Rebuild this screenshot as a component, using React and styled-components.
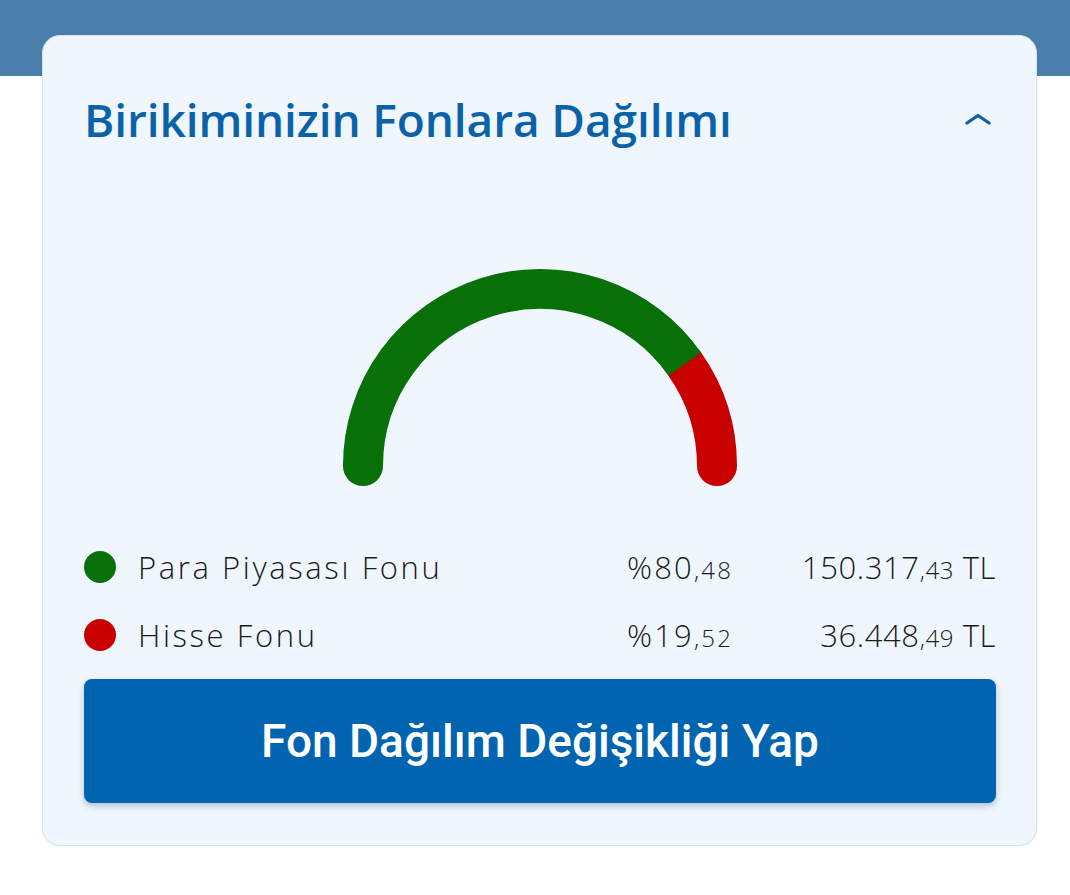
import React from "react";
import styled, { createGlobalStyle } from "styled-components";

const Global = createGlobalStyle`
  html, body { margin: 0; padding: 0; }
  body {
    background: linear-gradient(to bottom, #4a7fac 0, #4a7fac 76px, #ffffff 76px);
    font-family: "Open Sans", "Noto Sans", sans-serif;
    min-height: 895px;
  }
`;

const Page = styled.div`
  padding: 35px 33px 40px 42px;
`;

const Card = styled.section`
  box-sizing: border-box;
  width: 995px;
  background: #eff6fd;
  border: 1.5px solid #d6e2ed;
  border-radius: 18px;
  padding: 0 40px 42px 41px;
  box-shadow: 0 1px 3px rgba(0, 0, 0, 0.05);
`;

const Header = styled.div`
  display: flex;
  align-items: center;
  justify-content: space-between;
  height: 170px;
  padding-bottom: 4px;
  box-sizing: border-box;
`;

const Title = styled.h2`
  margin: 0;
  font-family: "Open Sans", "Noto Sans", sans-serif;
  font-weight: 600;
  font-size: 46px;
  letter-spacing: -0.1px;
  color: #0a62a9;
`;

const Toggle = styled.button`
  border: 0;
  background: none;
  padding: 0;
  margin-right: 5px;
  display: flex;
  cursor: pointer;
`;

const GaugeWrap = styled.div`
  display: flex;
  justify-content: center;
  padding: 55px 0 42px;
`;

const Legend = styled.div`
  display: grid;
  grid-template-columns: 1fr 200px 216px;
`;

const Row = styled.div`
  display: contents;
`;

const Cell = styled.div`
  height: 68px;
  display: flex;
  align-items: baseline;
  align-content: center;
  flex-wrap: wrap;
  font-size: 31px;
  color: #1b1b1b;
  font-weight: 300;
  white-space: pre;
  letter-spacing: ${(p) => p.$spacing || "0"};
  justify-content: ${(p) => p.$align || "flex-start"};
`;

const Dot = styled.span`
  width: 32px;
  height: 32px;
  border-radius: 50%;
  background: ${(p) => p.$color};
  margin-right: 22px;
  flex: none;
  align-self: center;
`;

const Small = styled.span`
  font-size: 24px;
`;

const ActionButton = styled.button`
  margin-top: 10px;
  width: 100%;
  height: 124px;
  border: 0;
  border-radius: 8px;
  background: #0064b0;
  color: #ffffff;
  font-family: Roboto, "Noto Sans", sans-serif;
  font-weight: 500;
  font-size: 46px;
  box-shadow: 0 3px 6px rgba(0, 40, 80, 0.25);
  cursor: pointer;
`;

const funds = [
  { name: "Para Piyasası Fonu", color: "#087008", pct: ["%80", ",48"], amt: ["150.317", ",43"], share: 80.48 },
  { name: "Hisse Fonu", color: "#c80000", pct: ["%19", ",52"], amt: ["36.448", ",49"], share: 19.52 },
];

function Gauge() {
  const cx = 220, cy = 205, r = 177;
  const splitDeg = 180 * (funds[0].share / 100);
  const a = Math.PI - (splitDeg * Math.PI) / 180;
  const sx = cx + r * Math.cos(a);
  const sy = cy - r * Math.sin(a);
  return (
    <svg width="440" height="230" viewBox="0 0 440 230">
      <path
        d={`M ${sx} ${sy} A ${r} ${r} 0 0 1 ${cx + r} ${cy}`}
        fill="none"
        stroke="#c80000"
        strokeWidth="40"
        strokeLinecap="round"
      />
      <path
        d={`M ${cx - r} ${cy} A ${r} ${r} 0 0 1 ${sx} ${sy}`}
        fill="none"
        stroke="#077007"
        strokeWidth="40"
        strokeLinecap="butt"
      />
      <path
        d={`M ${cx - r} ${cy} L ${cx - r} ${cy}`}
        fill="none"
        stroke="#077007"
        strokeWidth="40"
        strokeLinecap="round"
      />
    </svg>
  );
}

export default function App() {
  return (
    <>
      <Global />
      <Page>
        <Card>
          <Header>
            <Title>Birikiminizin Fonlara Dağılımı</Title>
            <Toggle aria-label="Daralt">
              <svg width="26" height="12" viewBox="0 0 26 12">
                <path d="M2 10 L13 2.5 L24 10" fill="none" stroke="#0a62a9" strokeWidth="3.2" strokeLinecap="round" strokeLinejoin="round" />
              </svg>
            </Toggle>
          </Header>
          <GaugeWrap>
            <Gauge />
          </GaugeWrap>
          <Legend>
            {funds.map((f) => (
              <Row key={f.name}>
                <Cell $spacing="2.6px">
                  <Dot $color={f.color} />
                  {f.name}
                </Cell>
                <Cell $align="center" $spacing="2.2px">
                  {f.pct[0]}
                  <Small>{f.pct[1]}</Small>
                </Cell>
                <Cell $align="flex-end" $spacing="0.6px">
                  {f.amt[0]}
                  <Small>{f.amt[1]}</Small>
                  {" TL"}
                </Cell>
              </Row>
            ))}
          </Legend>
          <ActionButton>Fon Dağılım Değişikliği Yap</ActionButton>
        </Card>
      </Page>
    </>
  );
}
